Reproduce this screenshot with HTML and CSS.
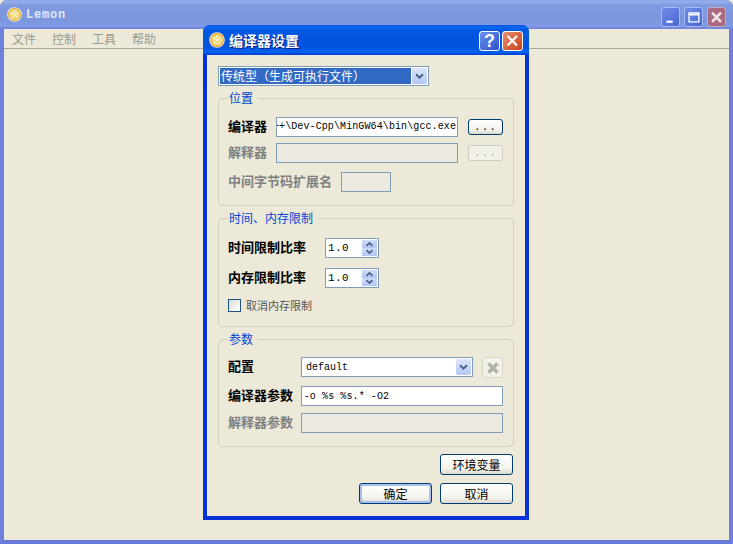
FILE: index.html
```html
<!DOCTYPE html>
<html lang="zh">
<head>
<meta charset="utf-8">
<title>Lemon</title>
<link rel="stylesheet" href="styles.css">
</head>
<body>
<svg class="defs" width="0" height="0" aria-hidden="true">
  <symbol id="lemon" viewBox="0 0 16 16">
    <circle cx="8" cy="8" r="7.800" fill="#f8f0d8"/>
    <circle cx="8" cy="8" r="6.900" fill="#e6a830"/>
    <circle cx="8" cy="8" r="5.600" fill="#f5dc84"/>
    <path d="M8 8V2.800M8 8l4.800-2M8 8l3.400 4M8 8l-3.400 4M8 8L3.200 6" stroke="#fbf3c8" stroke-width="1" fill="none"/>
  </symbol>
  <symbol id="chev" viewBox="0 0 9 7">
    <path d="M1 1.200l3.500 3.500L8 1.200" stroke="#4d6185" stroke-width="2" fill="none"/>
  </symbol>
</svg>

<main class="window">
  <header class="win-title">
    <svg class="win-icon"><use href="#lemon"/></svg>
    <span class="win-name">Lemon</span>
    <div class="win-ctrls">
      <span class="ctrl"><svg viewBox="0 0 19 20"><path d="M5 14h7v2.500H5z" fill="#fff"/></svg></span>
      <span class="ctrl"><svg viewBox="0 0 19 20"><path d="M4.500 5.500h11v10h-11zM4.500 7.500h11" stroke="#fff" stroke-width="1.500" fill="none"/></svg></span>
      <span class="ctrl ctrl-close"><svg viewBox="0 0 19 20"><path d="M4.500 5l10 10.500M14.500 5l-10 10.500" stroke="#f1e7e9" stroke-width="2.800"/></svg></span>
    </div>
  </header>
  <nav class="menubar">
    <span class="menu-item">文件</span>
    <span class="menu-item">控制</span>
    <span class="menu-item">工具</span>
    <span class="menu-item">帮助</span>
  </nav>
</main>

<section class="dialog">
  <header class="dlg-title">
    <svg class="dlg-icon"><use href="#lemon"/></svg>
    <span class="dlg-name">编译器设置</span>
    <span class="dlg-btn dlg-help">?</span>
    <span class="dlg-btn dlg-close"><svg viewBox="0 0 21 20"><path d="M5 4.500l10.500 10.500M15.500 4.500L5 15" stroke="#fff" stroke-width="2.400"/></svg></span>
  </header>
  <div class="dlg-body">
    <div class="combo combo-type">
      <span class="combo-text combo-selected">传统型（生成可执行文件）</span>
      <span class="arrow arrow-type"><svg class="chev"><use href="#chev"/></svg></span>
    </div>

    <div class="group group-pos">
      <div class="legend">位置</div>
      <div class="row row-compiler">
        <span class="label label-pos">编译器</span>
        <div class="field field-path mono"><span>C++\Dev-Cpp\MinGW64\bin\gcc.exe</span></div>
        <span class="btn btn-dots">...</span>
      </div>
      <div class="row row-interp">
        <span class="label label-pos off">解释器</span>
        <div class="field field-path field-off"></div>
        <span class="btn btn-dots btn-off">...</span>
      </div>
      <div class="row row-ext">
        <span class="label label-ext off">中间字节码扩展名</span>
        <div class="field field-ext field-off"></div>
      </div>
    </div>

    <div class="group group-limit">
      <div class="legend">时间、内存限制</div>
      <div class="row row-spin1">
        <span class="label label-spin">时间限制比率</span>
        <div class="spin">
          <span class="spin-text mono">1.0</span>
          <span class="spin-btns">
            <span class="spin-btn"><svg class="chev-s up"><use href="#chev"/></svg></span>
            <span class="spin-btn"><svg class="chev-s"><use href="#chev"/></svg></span>
          </span>
        </div>
      </div>
      <div class="row row-spin2">
        <span class="label label-spin">内存限制比率</span>
        <div class="spin">
          <span class="spin-text mono">1.0</span>
          <span class="spin-btns">
            <span class="spin-btn"><svg class="chev-s up"><use href="#chev"/></svg></span>
            <span class="spin-btn"><svg class="chev-s"><use href="#chev"/></svg></span>
          </span>
        </div>
      </div>
      <div class="row row-check">
        <span class="check"></span>
        <span class="check-label">取消内存限制</span>
      </div>
    </div>

    <div class="group group-args">
      <div class="legend">参数</div>
      <div class="row row-config">
        <span class="label label-args">配置</span>
        <div class="combo combo-config">
          <span class="combo-text mono">default</span>
          <span class="arrow arrow-config"><svg class="chev"><use href="#chev"/></svg></span>
        </div>
        <span class="btn btn-del"><svg viewBox="0 0 14 14"><path d="M2.500 2.500l9 9M11.500 2.500l-9 9" stroke="#b4b2a6" stroke-width="3.600"/></svg></span>
      </div>
      <div class="row row-cargs">
        <span class="label label-args">编译器参数</span>
        <div class="field field-args field-args-text mono"><span>-o %s %s.* -O2</span></div>
      </div>
      <div class="row row-iargs">
        <span class="label label-args off">解释器参数</span>
        <div class="field field-args field-off"></div>
      </div>
    </div>

    <div class="actions">
      <span class="btn btn-main">环境变量</span>
    </div>
    <div class="actions actions-last">
      <span class="btn btn-main btn-default">确定</span>
      <span class="btn btn-main">取消</span>
    </div>
  </div>
</section>
</body>
</html>
```

FILE: styles.css
```css
* { box-sizing: border-box; }
html, body { margin: 0; height: 100%; }
body {
  position: relative;
  width: 733px;
  height: 544px;
  overflow: hidden;
  background: #ece9d8;
  font-family: "Noto Sans CJK SC", "Liberation Sans", sans-serif;
  font-size: 13px;
  color: #000;
  text-spacing-trim: space-all;
  font-kerning: none;
}
.defs { position: absolute; }
.mono { font-family: "Liberation Mono", "DejaVu Sans Mono", monospace; }

/* main window */
.window {
  width: 733px;
  height: 544px;
  display: flex;
  flex-direction: column;
  border-left: 4px solid #6f80dc;
  border-right: 4px solid #6f80dc;
  border-bottom: 4px solid #6878d8;
  border-radius: 7px 7px 0 0;
  background: #ece9d8;
}
.win-title {
  height: 29px;
  margin: 0 -4px;
  padding: 0 7px;
  display: flex;
  align-items: center;
  border-radius: 7px 7px 0 0;
  background: linear-gradient(#8aa6ea 0, #98aeea 2px, #7f9ae0 5px, #7c96de 20px, #7f9ae4 26px, #6c80d8 29px);
}
.win-icon { width: 15px; height: 15px; }
.win-name {
  margin-left: 4px;
  font-family: "Liberation Mono", monospace;
  font-weight: bold;
  font-size: 12px;
  letter-spacing: .8px;
  color: #dfe8fb;
}
.win-ctrls { margin-left: auto; display: flex; gap: 4px; margin-top: 5px; }
.ctrl {
  width: 19px;
  height: 20px;
  border: 1px solid #a9bbf0;
  border-radius: 3px;
  background: linear-gradient(135deg, #6f8be6, #4a68d8);
}
.ctrl svg { display: block; width: 17px; height: 18px; }
.ctrl-close { background: #ab6a80; border-color: #c7a6c0; }
.menubar {
  height: 20px;
  display: flex;
  align-items: center;
  border-bottom: 1px solid #aca899;
  font-size: 12px;
  color: #9b9a8c;
}
.menu-item { padding: 0 8px; line-height: 18px; }

/* dialog */
.dialog {
  position: absolute;
  left: 203px;
  top: 25px;
  width: 326px;
  height: 495px;
  display: flex;
  flex-direction: column;
  border-radius: 7px 7px 0 0;
  background: #0831d9;
}
.dlg-title {
  height: 30px;
  padding: 0 6px;
  display: flex;
  align-items: center;
  border-radius: 7px 7px 0 0;
  background: linear-gradient(#0a50d8 0, #0a6af0 2px, #0458e0 5px, #0253de 22px, #0563ee 27px, #003dd0 30px);
}
.dlg-icon { width: 16px; height: 16px; }
.dlg-name {
  margin-left: 4px;
  font-weight: bold;
  font-size: 14px;
  color: #fff;
  text-shadow: 1px 1px 0 #0a1f80;
}
.dlg-btn {
  width: 21px;
  height: 20px;
  margin-top: 2px;
  border: 1px solid #fff;
  border-radius: 3px;
}
.dlg-help {
  margin-left: auto;
  background: linear-gradient(135deg, #6c92ee, #2a52c8);
  color: #fff;
  font: bold 18px/18px "Liberation Sans", sans-serif;
  text-align: center;
}
.dlg-close {
  margin-left: 2px;
  background: linear-gradient(135deg, #e8906c, #c8401c);
}
.dlg-close svg { display: block; width: 19px; height: 18px; }
.dlg-body {
  flex: 1;
  margin: 0 4px 4px;
  padding: 11px 11px 0;
  background: #ece9d8;
}

/* groups */
.group {
  margin-top: 12px;
  padding: 0 10px 0 9px;
  border: 1px solid #d0d0bf;
  border-radius: 5px;
}
.group-pos { height: 108px; }
.group-limit { height: 109px; }
.group-args { height: 108px; }
.legend {
  width: fit-content;
  height: 16px;
  margin: -8px 0 0 0;
  padding: 0 5px 0 1px;
  background: #ece9d8;
  color: #0046d5;
  font-size: 12px;
  line-height: 14px;
}
.row { display: flex; align-items: center; }
.label { height: 20px; padding-bottom: 2px; font-weight: bold; line-height: 18px; white-space: nowrap; }
.off { color: #808080; }
.label-pos { width: 48px; }
.label-ext { width: 113px; }
.label-spin { width: 97px; }
.label-args { width: 73px; }

.row-compiler { margin-top: 10px; height: 20px; }
.row-interp { margin-top: 6px; height: 20px; }
.row-ext { margin-top: 9px; height: 20px; }
.row-spin1 { margin-top: 11px; height: 20px; }
.row-spin2 { margin-top: 10px; height: 20px; }
.row-check { margin-top: 11px; height: 13px; }
.row-config { margin-top: 9px; height: 21px; align-items: flex-start; }
.row-cargs { margin-top: 8px; height: 20px; }
.row-iargs { margin-top: 7px; height: 20px; }

/* fields */
.field {
  height: 20px;
  border: 1px solid #7f9db9;
  background: #fff;
  font-size: 10px;
  letter-spacing: .1px;
  line-height: 18px;
  overflow: hidden;
  white-space: nowrap;
}
.field-off { background: #ebe9e0; }
.field-path {
  width: 182px;
  display: flex;
  justify-content: flex-end;
  padding-right: 1px;
}
.field-ext { width: 50px; }
.field-args { width: 203px; padding-left: 2px; }
.field-args-text { line-height: 20px; }

.combo {
  height: 20px;
  display: flex;
  border: 1px solid #7f9db9;
  background: #fff;
}
.combo-type { width: 211px; }
.combo-text { flex: 1; padding-left: 2px; line-height: 18px; font-size: 10px; white-space: nowrap; overflow: hidden; }
.combo-selected {
  margin: 1px 0 1px 1px;
  padding-left: 1px;
  background: #316ac5;
  color: #fff;
  font-size: 12px;
  line-height: 16px;
}
.combo-config { width: 172px; }
.combo-config .combo-text { padding-left: 4px; line-height: 20px; }
.arrow {
  width: 15px;
  margin: 1px;
  display: flex;
  align-items: center;
  justify-content: center;
  border-radius: 2px;
  background: linear-gradient(#dbe5fb, #b4c8f6);
}
.chev { width: 9px; height: 7px; }

.spin {
  width: 54px;
  height: 20px;
  display: flex;
  border: 1px solid #7f9db9;
  background: #fff;
}
.spin-text { flex: 1; padding-left: 2px; font-size: 11px; line-height: 18px; letter-spacing: .4px; }
.spin-btns { width: 15px; margin: 1px; display: flex; flex-direction: column; }
.spin-btn {
  flex: 1;
  display: flex;
  align-items: center;
  justify-content: center;
  background: linear-gradient(#cfdcfa, #b0c4f4);
}
.chev-s { width: 9px; height: 6px; }
.chev-s.up { transform: scaleY(-1); }

.check {
  width: 13px;
  height: 13px;
  border: 1px solid #1c5180;
  background: linear-gradient(135deg, #dcdcd7, #fff);
}
.check-label { margin-left: 5px; font-size: 11px; color: #555; line-height: 13px; }

/* buttons */
.btn {
  display: flex;
  align-items: center;
  justify-content: center;
  border: 1px solid #003c74;
  border-radius: 3px;
  background: linear-gradient(#fff, #f4f4ee 70%, #dcd8cc);
  white-space: nowrap;
}
.btn-dots {
  width: 35px;
  height: 16px;
  margin-left: 10px;
  font-family: "Liberation Mono", monospace;
  font-size: 11px;
  letter-spacing: 1px;
  line-height: 12px;
}
.btn-off { background: #f2f1e9; border-color: #cdcbbd; color: #aca899; }
.btn-del {
  width: 21px;
  height: 21px;
  margin-left: 9px;
  background: #f2f1e9;
  border-color: #d8d6c8;
}
.btn-del svg { width: 14px; height: 14px; display: block; }
.actions { margin-top: 7px; padding-right: 1px; display: flex; justify-content: flex-end; gap: 8px; }
.actions-last { margin-top: 8px; }
.btn-main { width: 73px; height: 21px; font-size: 12px; }
.btn-default { box-shadow: inset 0 0 0 2px #a8c0ee; }
```
